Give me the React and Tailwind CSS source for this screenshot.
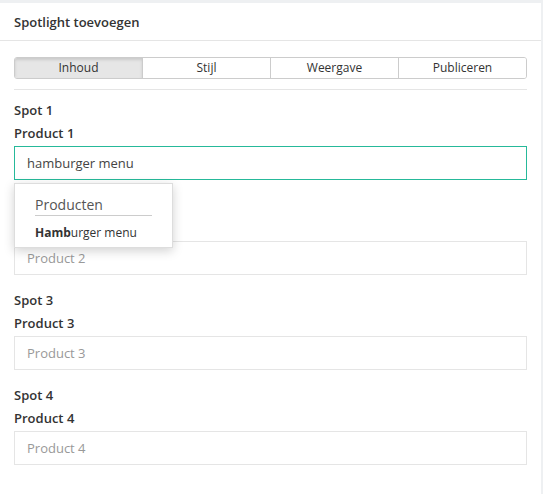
import React, { useState } from 'react';

const tabs = ['Inhoud', 'Stijl', 'Weergave', 'Publiceren'];

const Spot = ({ n, value, onChange, focused, children }) => (
    <div className="relative mb-[15px]">
        <div className="text-[13px] font-semibold leading-5 text-[#333]">Spot {n}</div>
        <div className="mt-[3px] text-[13px] font-semibold leading-5 text-[#333]">Product {n}</div>
        <input
            className={`mt-[3px] block h-[34px] w-full border px-3 text-[13px] outline-none placeholder:text-[#999] ${focused ? 'border-[#26b99a] text-[#444]' : 'border-[#e5e5e5] text-[#444]'}`}
            placeholder={`Product ${n}`}
            value={value}
            onChange={onChange}
        />
        {children}
    </div>
);

export default function App() {
    const [active, setActive] = useState('Inhoud');
    const [query, setQuery] = useState('hamburger menu');

    return (
        <div className="min-h-[494px] w-[543px] bg-[#eef0f2] pt-[3px] pr-[2px]" style={{ fontFamily: '"Open Sans", "Noto Sans", sans-serif' }}>
            <div className="min-h-[491px] bg-white">
                <div className="flex h-[38px] items-center border-b border-[#e5e5e5] px-[14px] pt-[2px]">
                    <h2 className="text-[13px] font-semibold text-[#333]">Spotlight toevoegen</h2>
                </div>

                <div className="px-[14px] pt-[16px]">
                    <div className="flex h-[22px] overflow-hidden rounded-[3px] border border-[#ccc]">
                        {tabs.map((t, i) => (
                            <button
                                key={t}
                                onClick={() => setActive(t)}
                                className={`flex-1 text-[12px] leading-none text-[#333] ${i > 0 ? 'border-l border-[#ccc]' : ''} ${active === t ? 'bg-[#e6e6e6] shadow-[inset_0_2px_3px_rgba(0,0,0,0.12)]' : 'bg-white'}`}
                            >
                                {t}
                            </button>
                        ))}
                    </div>
                    <div className="mt-[10px] mb-[10px] border-t border-[#e5e5e5]" />

                    <Spot n={1} value={query} onChange={e => setQuery(e.target.value)} focused>
                        <div className="absolute left-0 top-[83px] z-10 w-[159px] border border-[#ddd] bg-white px-5 pt-[11px] pb-[4px] shadow-[0_3px_10px_rgba(0,0,0,0.18)]">
                            <div className="border-b border-[#ccc] text-[14px] leading-5 text-[#555]">Producten</div>
                            <div className="mt-[7px] text-[12px] leading-5 text-[#333]"><span className="font-bold">Hamb</span>urger menu</div>
                        </div>
                    </Spot>
                    <Spot n={2} value="" onChange={() => {}} />
                    <Spot n={3} value="" onChange={() => {}} />
                    <Spot n={4} value="" onChange={() => {}} />
                </div>
            </div>
        </div>
    );
}
